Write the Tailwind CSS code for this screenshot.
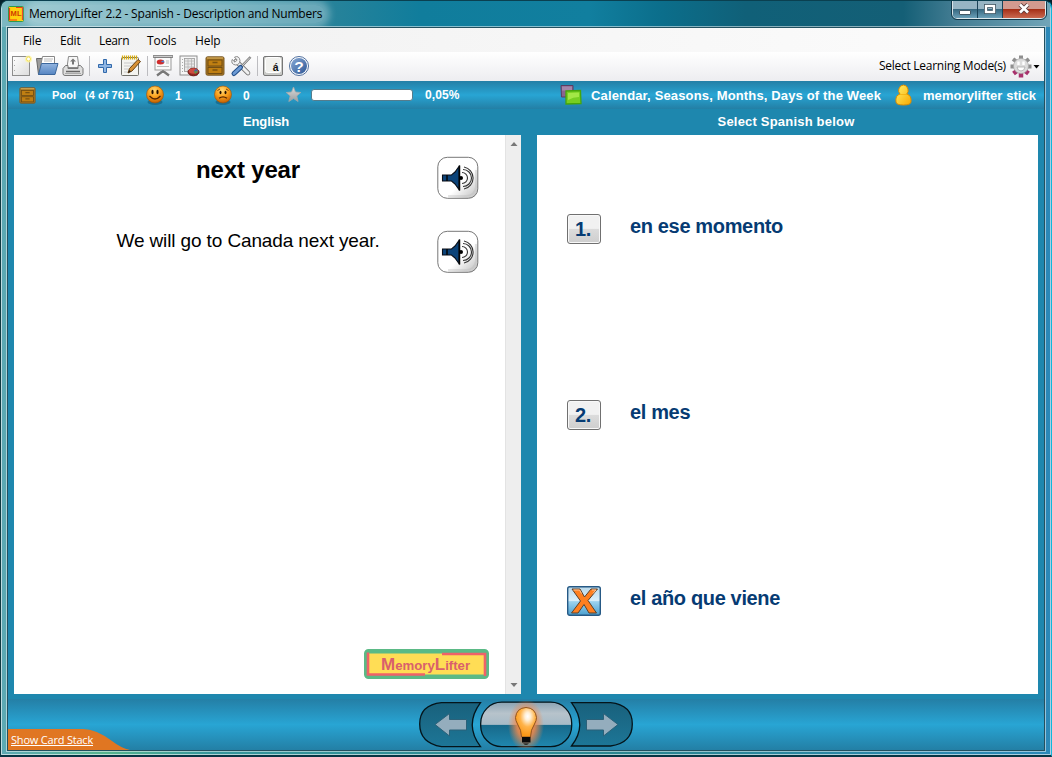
<!DOCTYPE html>
<html lang="en">
<head>
<meta charset="utf-8">
<title>MemoryLifter 2.2</title>
<script src="https://cdn.jsdelivr.net/npm/@tailwindcss/browser@4"></script>
</head>
<body class="w-[1052px] h-[757px] overflow-hidden bg-[#05202c]">
<svg width="0" height="0" class="absolute">
  <defs>
    <linearGradient id="paper" x1="0" y1="0" x2="1" y2="1"><stop offset="0" stop-color="#fff"/><stop offset="1" stop-color="#dcdcdc"/></linearGradient>
    <linearGradient id="blue" x1="0" y1="0" x2="0" y2="1"><stop offset="0" stop-color="#93b5e0"/><stop offset="1" stop-color="#5585c2"/></linearGradient>
    <linearGradient id="help" x1="0" y1="0" x2="1" y2="1"><stop offset="0" stop-color="#88a9d5"/><stop offset="1" stop-color="#2d5796"/></linearGradient>
    <radialGradient id="face" cx=".45" cy=".25" r=".75"><stop offset="0" stop-color="#ffd873"/><stop offset=".5" stop-color="#fba21e"/><stop offset="1" stop-color="#c25e00"/></radialGradient>
    <linearGradient id="lens" x1="0" y1="0" x2="0" y2="1"><stop offset="0" stop-color="#8aa3b3"/><stop offset=".25" stop-color="#b7c3cb"/><stop offset=".5" stop-color="#a7bbc7"/><stop offset=".51" stop-color="#17698a"/><stop offset="1" stop-color="#2087ae"/></linearGradient>
    <linearGradient id="pill" x1="0" y1="0" x2="0" y2="1"><stop offset="0" stop-color="#19617c"/><stop offset="1" stop-color="#1d7697"/></linearGradient>
    <radialGradient id="glow"><stop offset="0" stop-color="#ff8a3c"/><stop offset=".5" stop-color="#f58a4a" stop-opacity=".85"/><stop offset="1" stop-color="#f58a4a" stop-opacity="0"/></radialGradient>
    <radialGradient id="bulb" cx=".58" cy=".3" r=".65"><stop offset="0" stop-color="#fff"/><stop offset=".2" stop-color="#fff0d8"/><stop offset=".55" stop-color="#ffb349"/><stop offset="1" stop-color="#fb9717"/></radialGradient>
    <linearGradient id="key" x1="0" y1="0" x2="1" y2="1"><stop offset=".6" stop-color="#fff"/><stop offset="1" stop-color="#bcbcbc"/></linearGradient>
    <linearGradient id="star" x1="0" y1="0" x2="0" y2="1"><stop offset="0" stop-color="#dcdcdc"/><stop offset="1" stop-color="#9b9ea0"/></linearGradient>
    <linearGradient id="gold" x1="0" y1="0" x2="1" y2="1"><stop offset="0" stop-color="#fff36a"/><stop offset="1" stop-color="#f8a800"/></linearGradient>
    <linearGradient id="sky" x1="0" y1="0" x2="0" y2="1"><stop offset="0" stop-color="#b9d9ea"/><stop offset=".5" stop-color="#dceffa"/><stop offset=".52" stop-color="#9dd3ef"/><stop offset="1" stop-color="#4ba0cf"/></linearGradient>
    <symbol id="drawer" viewBox="0 0 20 20">
      <rect x="1" y=".8" width="18" height="18.400" rx="1.500" fill="#a87620" stroke="#7a5a28"/>
      <path d="M2 2H18" stroke="#d9b466"/>
      <rect x="3" y="4" width="14" height="6" fill="#c07f12" stroke="#6d4a12" stroke-width=".9"/>
      <rect x="3" y="11.500" width="14" height="6" fill="#c07f12" stroke="#6d4a12" stroke-width=".9"/>
      <path d="M7.500 6.500h5M7.500 14h5" stroke="#7c530f" stroke-width="1.500"/>
    </symbol>
    <symbol id="speaker" viewBox="0 0 42 43">
      <rect x=".8" y="1.300" width="40" height="41" rx="9.500" fill="url(#key)" stroke="#777"/>
      <path d="M39 14V31Q38 39.500 29 40H11" fill="none" stroke="#b8b8b8" stroke-width="2" opacity=".35"/>
      <path d="M5.500 19h9l3.500-3 4-5.500V33.500l-4-5.500-3.500-3h-9z" fill="#0b4379" stroke="#0a0f18" stroke-width="1.100"/>
      <path d="M22.500 9.500V34.500M10 19v6" stroke="#050505" stroke-width="1.500"/>
      <circle cx="24" cy="22" r="2" fill="#000"/>
      <path d="M25 16.500a5.500 5.500 0 0 1 0 11M26 13.500a8.500 8.500 0 0 1 0 17M27 11a11.200 11.200 0 0 1 0 22" fill="none" stroke="#333" stroke-width="1.100"/>
    </symbol>
  </defs>
</svg>
<main class="w-[1052px] h-[757px] rounded-t-lg border border-b-2 border-t-[#0a4050] border-l-[#103a42] border-r-[#10b8dc] border-b-[#063443] bg-[linear-gradient(90deg,#5da9b4,#55b48e_10%,#35969b_20%,#2b858f_60%,#2b88b8)] font-['Open_Sans','Noto_Sans',sans-serif] overflow-hidden">
<div class="h-[754px] flex flex-col rounded-t-lg border border-white/60">
  <header class="h-[26px] -mt-px flex items-start shrink-0 bg-[linear-gradient(90deg,#7db8c2_0,#55a0b0_13%,#4b9cae_20%,#28839a_31%,#107d9c_40%,#117f9f_56%,#0b6e8b_63%,#106078_71%,#145f76_86%,#447d93_91%,#71a5b8)]">
    <svg class="ml-[6px] mt-[5px] shrink-0" width="16" height="16" viewBox="0 0 16 16"><rect x=".5" y=".5" width="15" height="15" rx="1" fill="#ffcf0c" stroke="#2c9a4b"/><path d="M1.500 2V14H9M8 1.500h6.500V14" fill="none" stroke="#ef3a18" stroke-width="1.200"/><text x="2.500" y="10" font-family="Liberation Sans" font-weight="bold" font-size="7.500" fill="#cf3c00" textLength="11">ML</text></svg>
    <h1 class="ml-[5px] mt-[4px] w-[296px] h-[18px] leading-[18px] whitespace-nowrap text-[12px] tracking-[-0.21px] text-black rounded-full bg-white/30 shadow-[0_0_7px_5px_rgba(255,255,255,.3)]">MemoryLifter 2.2 - Spanish - Description and Numbers</h1>
    <div class="ml-auto mr-[4px] h-[18px] flex overflow-hidden rounded-b-[5px] border border-t-0 border-white/80 outline outline-[#12384a]">
      <div class="w-[25px] flex items-center justify-center border-r border-[#1b4358] bg-linear-to-b from-[#97b5c4] from-45% via-[#376981] via-50% to-[#6ba0b8]"><i class="mt-[5px] h-[5px] w-[12px] border border-[#435966] bg-white rounded-[1px]"></i></div>
      <div class="w-[25px] flex items-center justify-center border-r border-[#1b4358] bg-linear-to-b from-[#97b5c4] from-45% via-[#376981] via-50% to-[#6ba0b8]"><svg class="-mt-[2px]" width="12" height="10"><rect x="2" y="2" width="8" height="6" fill="none" stroke="#435966" stroke-width="4"/><rect x="2" y="2" width="8" height="6" fill="none" stroke="#fff" stroke-width="2.300"/></svg></div>
      <div class="w-[42px] flex items-center justify-center bg-linear-to-b from-[#d39a8f] from-45% via-[#a52f17] via-50% to-[#c9684f]"><svg class="-mt-[2px]" width="14" height="11"><path d="M3 1.500 11 9.500M11 1.500 3 9.500" stroke="#5b3c3c" stroke-width="4.400"/><path d="M3 1.500 11 9.500M11 1.500 3 9.500" stroke="#fff" stroke-width="2.600"/></svg></div>
    </div>
  </header>
  <section class="ml-[5px] w-[1038px] h-[724px] shrink-0 border border-[#23505f] outline outline-white/50 flex flex-col bg-[#1e87ae] overflow-hidden">
    <nav class="h-[24px] pt-px shrink-0 flex items-center bg-linear-to-r from-[#f0f0f0] to-[#fcfcfc] text-[12px] text-black whitespace-nowrap">
      <span class="ml-[15px] w-[37px] tracking-[-0.2px]">File</span><span class="w-[39px] tracking-[-0.2px]">Edit</span><span class="w-[48px] tracking-[-0.35px]">Learn</span><span class="w-[48px] tracking-[-0.1px]">Tools</span><span class="tracking-[-0.1px]">Help</span>
    </nav>
    <div class="h-[29px] pb-px shrink-0 flex items-center bg-linear-to-b from-white to-[#ededf0]">
      <svg width="26" height="26" viewBox="0 0 26 26"><rect x="4.500" y="3.500" width="17" height="19" fill="url(#paper)" stroke="#8d8d8d"/><path d="M6.500 7v1M6.500 12v1M6.500 17v1" stroke="#aaa"/><circle cx="20.500" cy="6" r="3.500" fill="#fff6a0" opacity=".8"/><circle cx="20.500" cy="6" r="2" fill="#fff" stroke="#f3df5a"/></svg>
      <svg width="26" height="26" viewBox="0 0 26 26"><path d="M2.500 5.500h7l1 2v14h-6z" fill="#9c9c9c" stroke="#686868"/><path d="M8.500 3.500h12v10h-14z" fill="#fff" stroke="#888"/><path d="M10 6h9M10 8h8" stroke="#bbb"/><path d="M7.500 10.500H24L21 21.500H4.500z" fill="url(#blue)" stroke="#3b679d"/></svg>
      <svg width="26" height="26" viewBox="0 0 26 26"><path d="M8.500 3.500h9l1.500 11H7z" fill="#f7f7f7" stroke="#8b8b8b"/><path d="M13 5.500l3 3h-2v3h-2v-3h-2z" fill="#777"/><path d="M5.500 12.500h2.500v3h10v-3h2.500l2.500 3v5q0 2-2 2H5q-2 0-2-2v-5z" fill="#dedede" stroke="#777"/><path d="M6 18.500h14" stroke="#666" stroke-width="1.500"/><path d="M5 20.500h16" stroke="#aaa"/></svg>
      <div class="w-[6px] h-[20px] flex justify-center"><i class="w-px bg-[#bcbcc0]"></i></div>
      <svg width="26" height="26" viewBox="0 0 26 26"><path d="M11.500 6.500h3v5h5v3h-5v5h-3v-5h-5v-3h5z" fill="#8fb5e3" stroke="#3169ab"/></svg>
      <svg width="26" height="26" viewBox="0 0 26 26"><rect x="3.500" y="4.500" width="17" height="18" rx="1" fill="#f4f4f0" stroke="#71716b"/><path d="M6 10h11M6 13h9M6 16h7M6 19h5" stroke="#c8c8c8"/><path d="M4.500 2.500v4M6.500 2.500v4M8.500 2.500v4M10.500 2.500v4M12.500 2.500v4M14.500 2.500v4M16.500 2.500v4M18.500 2.500v4" stroke="#d7ac13" stroke-width="1.200"/><path d="M20 6.500l2.500 2-8.500 9.500-4 2 1.500-4.500z" fill="#d79135" stroke="#694212"/><path d="M10 20l1.500-3 1.500 1.500z" fill="#222"/></svg>
      <div class="w-[6px] h-[20px] flex justify-center"><i class="w-px bg-[#bcbcc0]"></i></div>
      <svg width="26" height="26" viewBox="0 0 26 26"><path d="M13 17v2M13 18l-6 4.500M13 18l6 4.500" stroke="#777" stroke-width="2.300"/><rect x="5" y="4" width="16" height="13" fill="#fafafa" stroke="#999"/><path d="M3 3.500h20" stroke="#686868" stroke-width="2.500"/><path d="M3.500 3.500h19" stroke="#ccc"/><ellipse cx="10.500" cy="9" rx="3.800" ry="2.500" fill="#d02c2c"/><path d="M10.500 9l3-2 1 2.500z" fill="#4e80c9"/><path d="M16 8h3M16 10h3M7 13.500h12" stroke="#bbb"/></svg>
      <svg width="26" height="26" viewBox="0 0 26 26"><rect x="4" y="3" width="17" height="19" fill="#f7f7f7" stroke="#8e8e8e"/><path d="M6.500 6v14" stroke="#aaa" stroke-dasharray="1 2"/><rect x="8.500" y="5.500" width="10" height="13" fill="#e9e9e9" stroke="#999" stroke-width=".8"/><path d="M8.500 8h10M8.500 11h10M8.500 14h10M12 5.500v13M15.500 5.500v13" stroke="#b5b5b5" stroke-width=".8"/><ellipse cx="17.500" cy="19" rx="5.500" ry="3.800" fill="#8d2720" stroke="#711714"/><ellipse cx="17.500" cy="18" rx="4.800" ry="2.800" fill="#cf4a40"/><path d="M17.500 18.500l2.500-2.700 2.500 2.700z" fill="#3b6ca8"/><path d="M17.500 18.500l2 2.200 3-2.200z" fill="#559b45"/></svg>
      <svg width="26" height="26" viewBox="0 0 26 26"><use href="#drawer" x="3" y="3" width="20" height="20"/></svg>
      <svg width="26" height="26" viewBox="0 0 26 26"><path d="M8 8l12 12" stroke="#777" stroke-width="4.600" stroke-linecap="round"/><path d="M8 8l12 12" stroke="#f0f0f0" stroke-width="3" stroke-linecap="round"/><path d="M4.200 6.500L7 9.200 9.200 7 6.500 4.200Q11 2 12 7.500 11.500 12 7.500 12 2.500 11 4.200 6.500z" fill="#f4f4f4" stroke="#888"/><path d="M22.500 4L12 15" stroke="#777" stroke-width="2.500"/><path d="M22 4.500L12 15" stroke="#ddd"/><path d="M12.500 14.500L6 20.500" stroke="#24508a" stroke-width="5" stroke-linecap="round"/><path d="M12.500 14.500L6 20.500" stroke="#6d9bd5" stroke-width="2.800" stroke-linecap="round"/></svg>
      <div class="w-[6px] h-[20px] flex justify-center"><i class="w-px bg-[#bcbcc0]"></i></div>
      <svg width="26" height="26" viewBox="0 0 26 26"><rect x="3.500" y="3.500" width="19" height="19" rx="1.500" fill="#c9cac7" stroke="#777"/><rect x="5.500" y="4.500" width="15" height="15" rx="2" fill="#f1f1ee" stroke="#fff"/><text x="12.800" y="17.500" font-family="Liberation Sans" font-size="10.500" font-weight="bold" fill="#111">á</text></svg>
      <svg width="26" height="26" viewBox="0 0 26 26"><circle cx="13" cy="13" r="9.500" fill="#fff" stroke="#4f6f9e"/><circle cx="13" cy="13" r="8" fill="url(#help)"/><text x="8.300" y="18.500" font-family="Liberation Sans" font-weight="bold" font-size="15.500" fill="#fff">?</text></svg>
      <span class="ml-auto w-[129px] whitespace-nowrap text-[12px] tracking-[-0.27px] text-black">Select Learning Mode(s)</span>
      <svg width="36" height="26" viewBox="0 0 36 26"><g stroke-width="4" fill="none"><path d="M13 2.500v4M5 6l4 3M21 6l-4 3M2.500 13.500h5M18.500 13.500h5" stroke="#8f8f8f"/><path d="M5.500 20.500l4-3M13 24.500v-5M20.500 20.500l-4-3" stroke="#a8326d" stroke-width="4.500"/></g><circle cx="13" cy="13" r="7.500" fill="#dcdcdc" stroke="#aaa" stroke-width=".7"/><path d="M10.500 8.500v3.500M15.500 8.500v3.500" stroke="#fff" stroke-width="2.400"/><path d="M9 14h8q-.5 4-4 4t-4-4z" fill="#fff" stroke="#aaa" stroke-width=".8"/><path d="M25.500 12h6l-3 3.500z" fill="#000"/></svg>
    </div>
    <div class="h-[28px] shrink-0 flex items-center bg-linear-to-b from-[#247fa6] via-[#28a5d4] to-[#237fa5] text-white font-bold font-['Liberation_Sans',Arial,sans-serif] whitespace-nowrap">
      <div class="w-[44px] pl-[11px] pt-px"><svg width="17" height="17"><use href="#drawer" width="17" height="17"/></svg></div>
      <span class="w-[33px] text-[11px] tracking-[.1px]">Pool</span><span class="w-[60px] text-[11px] tracking-[.05px]">(4 of 761)</span>
      <svg width="30" height="22" viewBox="0 0 30 22"><ellipse cx="10" cy="18" rx="7.500" ry="3" fill="#10506b" opacity=".5"/><circle cx="10" cy="10.500" r="8.500" fill="url(#face)" stroke="#a45200" stroke-width=".6"/><ellipse cx="7.500" cy="8" rx="1.100" ry="2.300" fill="#241000"/><ellipse cx="12.500" cy="8" rx="1.100" ry="2.300" fill="#241000"/><path d="M4.500 12q5.500 6 11 0" fill="none" stroke="#592700" stroke-width="1.300"/></svg>
      <span class="w-[38px] pt-px text-[12px]">1</span>
      <svg width="30" height="22" viewBox="0 0 30 22"><ellipse cx="10" cy="18" rx="7.500" ry="3" fill="#10506b" opacity=".5"/><circle cx="10" cy="10.500" r="8.500" fill="url(#face)" stroke="#a45200" stroke-width=".6"/><ellipse cx="7.500" cy="8.500" rx="1" ry="1.800" fill="#241000"/><ellipse cx="12.500" cy="8.500" rx="1" ry="1.800" fill="#241000"/><path d="M4.500 6.500l2.500-1.500M15.500 6.500l-2.500-1.500" stroke="#592700" stroke-width=".8"/><path d="M6 14.300q4-3 8 0" fill="none" stroke="#592700" stroke-width="1.300"/></svg>
      <span class="w-[43px] pt-px text-[12px]">0</span>
      <svg width="25" height="18" viewBox="0 0 25 18"><path d="M7.500 1l2 5 5.300.5-4 3.500 1.300 5.500-4.600-3-4.700 3L4.200 10 .2 6.500 5.500 6z" fill="url(#star)" stroke="#a4a9ab" stroke-width=".8"/></svg>
      <div class="h-[12px] w-[102px] rounded-[3px] border border-[#557c8c] bg-white"></div>
      <span class="ml-[12px] w-[135px] text-[12px] tracking-[.1px]">0,05%</span>
      <svg width="31" height="22" viewBox="0 0 31 22"><path d="M1 1.500h12v11.500H1.500z" fill="#8b648e" stroke="#5c3d61"/><path d="M2 2.500h10v4H2z" fill="#a585a9"/><path d="M6 7l14.500-.5.500 13-15 .5z" fill="#77cf22" stroke="#46a50b" stroke-width="1.300"/><path d="M8 9l11-.5v4.500q-6 0-11 3z" fill="#a3e746"/></svg>
      <span class="w-[304px] pt-px text-[13px] tracking-[.15px]">Calendar, Seasons, Months, Days of the Week</span>
      <svg width="28" height="22" viewBox="0 0 28 22"><path d="M1 18q-1-6.500 4-8-2-2-1.200-5Q5 1 8.500 1t4.500 4q.7 3-1.200 5 5 1.500 4.200 8-.3 3-7.500 3T1 18z" fill="url(#gold)" stroke="#d98b00"/><path d="M4.500 10.500h8" stroke="#f0a600" opacity=".6"/></svg>
      <span class="pt-px text-[13px] tracking-[.06px]">memorylifter stick</span>
    </div>
    <div class="h-[26px] shrink-0 flex items-center text-[13px] font-bold text-white font-['Liberation_Sans',Arial,sans-serif]">
      <div class="w-[516px] shrink-0 text-center tracking-[-0.1px]">English</div><div class="w-[524px] shrink-0 text-center tracking-[.2px]">Select Spanish below</div>
    </div>
    <div class="h-[559px] shrink-0 flex gap-[16px] pl-[6px] font-['Liberation_Sans',Arial,sans-serif]">
      <article class="w-[507px] shrink-0 flex bg-white">
        <div class="w-[491px] flex flex-col">
          <div class="h-[74px] mt-[21px] flex"><h2 class="ml-[59px] w-[350px] text-center text-[24px] leading-[28px] tracking-[-0.17px] font-bold">next year</h2><svg class="ml-[14px]" width="42" height="43"><use href="#speaker" width="42" height="43"/></svg></div>
          <div class="h-[74px] flex"><p class="ml-[59px] w-[350px] text-center text-[19px] leading-[22px] tracking-[-0.12px]">We will go to Canada next year.</p><svg class="ml-[14px]" width="42" height="43"><use href="#speaker" width="42" height="43"/></svg></div>
          <svg class="mt-auto ml-[350px] mb-[15px]" width="125" height="30" viewBox="0 0 125 30"><rect x="1.500" y="1.500" width="122" height="27" rx="3" fill="#ffdd55" stroke="#5bba86" stroke-width="3"/><rect x="3.500" y="3.500" width="118" height="23" fill="none" stroke="#5bba86" stroke-width="2"/><path d="M4 3.500V25.500H61M78 5h43v22" fill="none" stroke="#ee6269" stroke-width="2.600"/><text x="17" y="20.500" font-family="Liberation Sans" font-weight="bold" fill="#d9606c"><tspan font-size="17">M</tspan><tspan font-size="13.200">emory</tspan><tspan font-size="17">L</tspan><tspan font-size="13.200">ifter</tspan></text></svg>
        </div>
        <div class="w-[16px] border-l border-[#e3e3e3] bg-[#eeeeee] flex flex-col items-center justify-between py-[6px]"><svg width="8" height="5"><path d="M.5 5L4 1l3.500 4z" fill="#777"/></svg><svg width="8" height="5"><path d="M.5 0L4 4l3.500-4z" fill="#777"/></svg></div>
      </article>
      <article class="w-[501px] shrink-0 bg-white text-[20px] leading-[24px] tracking-[-0.35px] font-bold text-[#063b73]">
        <div class="h-[186px] mt-[78px] flex"><button class="ml-[30px] mt-px w-[34px] h-[30px] pr-[2px] rounded-[3px] border border-[#707070] shadow-[inset_0_0_0_1px_#f8f8f8] bg-linear-to-b from-[#f1f1f1] from-48% via-[#dcdcdc] via-50% to-[#cecece] font-bold leading-[26px]">1.</button><span class="ml-[29px] mt-px">en ese momento</span></div>
        <div class="h-[186px] flex"><button class="ml-[30px] mt-px w-[34px] h-[30px] pr-[2px] rounded-[3px] border border-[#707070] shadow-[inset_0_0_0_1px_#f8f8f8] bg-linear-to-b from-[#f1f1f1] from-48% via-[#dcdcdc] via-50% to-[#cecece] font-bold leading-[26px]">2.</button><span class="ml-[29px] mt-px">el mes</span></div>
        <div class="flex"><svg class="ml-[30px] mt-px" width="34" height="30" viewBox="0 0 34 30"><rect x=".7" y=".7" width="32.600" height="28.600" rx="2" fill="url(#sky)" stroke="#265985" stroke-width="1.400"/><path d="M5 3h8l4.500 8L24 3h6.500L21 14.500 29.500 27H22l-5-8.500L11 27H4.500L13.500 15z" fill="#ff7f1f" stroke="#59412d"/><path d="M6.500 4h6l2 3.500M25 4h4l-3 3.500" stroke="#ffc495" fill="none"/></svg><span class="ml-[29px] mt-px">el año que viene</span></div>
      </article>
    </div>
    <footer class="mt-[5px] h-[51px] shrink-0 flex items-start bg-linear-to-b from-[#247fa6] via-[#28a5d4] to-[#237fa5]">
      <div class="relative w-[411px] h-full flex items-end"><svg width="122" height="21"><path d="M0 0H75Q88 0 104 12 113 19 122 21H0z" fill="#e07622"/></svg><a class="absolute left-[3px] bottom-[3px] text-[11px] leading-[15px] tracking-[-0.2px] text-white underline whitespace-nowrap">Show Card Stack</a></div>
      <svg class="mt-[2px]" width="214" height="47" viewBox="0 0 214 47">
        <path d="M61.500 1.700H22.500Q.7 4 .7 23T22.500 45.700H61.500Q45 24 61.500 1.700z" fill="url(#pill)" stroke="#04141a" stroke-width="1.300"/>
        <path d="M152.500 1.700H191.500Q213.300 4 213.300 23T191.500 45H152.500Q169 24 152.500 1.700z" fill="url(#pill)" stroke="#04141a" stroke-width="1.300"/>
        <rect x="61.700" y="1.200" width="91" height="44.500" rx="21" fill="url(#lens)" stroke="#04141a" stroke-width="1.300"/>
        <path d="M16 23.500L30.500 12.500v6H47.500v10.500H30.500v6z" fill="#94adbd" stroke="#2b6179"/>
        <path d="M199 23.500L184.500 12.500v6H167.500v10.500H184.500v6z" fill="#94adbd" stroke="#2b6179"/>
        <ellipse cx="107" cy="24" rx="18" ry="26" fill="url(#glow)"/>
        <path d="M102.500 36Q102.500 29 98.500 23 96.500 19.500 96.500 16.500 97.500 7 107 6.500 116.500 7 117.500 16.500 117.500 19.500 115.500 23 111.500 29 111.500 36z" fill="url(#bulb)" stroke="#91541c"/>
        <path d="M103 36h8.500v5.500H103zM104 42.500h6q-3 2.500-6 0z" fill="#0a0a0a"/>
      </svg>
    </footer>
  </section>
</div>
</main>
</body>
</html>
